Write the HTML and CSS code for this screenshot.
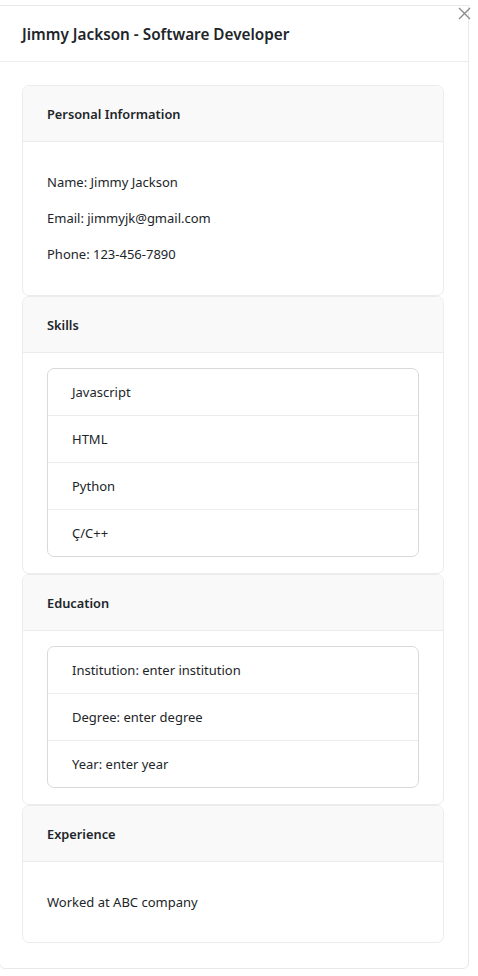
FILE: index.html
```html
<!DOCTYPE html>
<html>
<head>
<meta charset="utf-8">
<link rel="stylesheet" href="styles.css">
</head>
<body>
<div class="modal">
  <button class="close" aria-label="Close">
    <svg width="13" height="13" viewBox="0 0 13 13"><path d="M1 1L12 12M12 1L1 12" stroke="#8c8c8c" stroke-width="1.4" fill="none"/></svg>
  </button>
  <div class="modal-header">
    <h2 class="title">Jimmy Jackson - Software Developer</h2>
  </div>
  <div class="modal-body">
    <div class="card">
      <div class="card-header">Personal Information</div>
      <div class="card-body">
        <p>Name: Jimmy Jackson</p>
        <p>Email: jimmyjk@gmail.com</p>
        <p>Phone: 123-456-7890</p>
      </div>
    </div>
    <div class="card">
      <div class="card-header">Skills</div>
      <div class="card-body list-body">
        <ul class="list">
          <li>Javascript</li>
          <li>HTML</li>
          <li>Python</li>
          <li>Ç/C++</li>
        </ul>
      </div>
    </div>
    <div class="card">
      <div class="card-header">Education</div>
      <div class="card-body list-body">
        <ul class="list">
          <li>Institution: enter institution</li>
          <li>Degree: enter degree</li>
          <li>Year: enter year</li>
        </ul>
      </div>
    </div>
    <div class="card">
      <div class="card-header">Experience</div>
      <div class="card-body exp-body">
        <p>Worked at ABC company</p>
      </div>
    </div>
  </div>
</div>
</body>
</html>
```
FILE: styles.css
```css
* { box-sizing: border-box; }
html, body { margin: 0; padding: 0; background: #fff; }
body {
  font-family: "Noto Sans", "Open Sans", sans-serif;
  color: #212529;
  font-size: 13px;
}
.modal {
  position: relative;
  margin: 5px 0 0 -1px;
  width: 470px;
  height: 964px;
  border: 1px solid #e9e9e9;
  border-radius: 0 0 6px 6px;
  background: #fff;
}
.close {
  position: absolute;
  top: 1px;
  right: -3px;
  border: 0;
  background: transparent;
  padding: 0;
  width: 13px;
  height: 13px;
  line-height: 0;
}
.modal-header {
  height: 56px;
  border-bottom: 1px solid #ececec;
  padding: 0 22px;
  display: flex;
  align-items: center;
}
.title {
  margin: 0;
  font-size: 15.3px;
  font-weight: 600;
}
.modal-body {
  padding: 23px 24px 0 22px;
  display: flex;
  flex-direction: column;
}
.card {
  border: 1px solid #ececec;
  border-radius: 7px;
  overflow: hidden;
}
.card-header {
  height: 56px;
  background: #f9f9f9;
  border-bottom: 1px solid #ececec;
  padding: 0 24px;
  display: flex;
  align-items: center;
  font-weight: 600;
  font-size: 12.8px;
}
.card-body {
  padding: 22px 24px 23px 24px;
}
.card-body p {
  margin: 0;
  height: 36px;
  line-height: 36px;
  font-size: 13px;
}
.list-body { padding: 15px 24px 16px 24px; }
.list {
  list-style: none;
  margin: 0;
  padding: 0;
  border: 1px solid #d9d9d9;
  border-radius: 7px;
}
.list li {
  height: 47px;
  line-height: 46px;
  padding: 0 24px;
  border-top: 1px solid #ececec;
  font-size: 13px;
}
.list li:first-child { border-top: 0; height: 46px; }
.exp-body { padding: 22px 24px 22px; }
```
